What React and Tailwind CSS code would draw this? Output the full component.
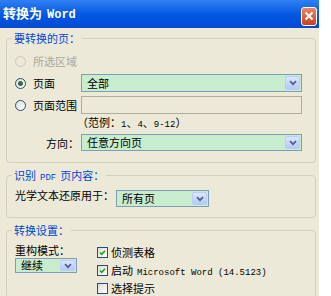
import clsx from 'clsx'

// Win XP style "转换为 Word" dialog

function Mono({ children, className }) {
  return (
    <span className={clsx("font-['Liberation_Mono',monospace] text-[9px] leading-none", className)}>
      {children}
    </span>
  )
}

function Chevron() {
  return (
    <svg width="8" height="6" viewBox="0 0 8 6">
      <path d="M1 1.2 L4 4.2 L7 1.2" stroke="#4d6185" strokeWidth="1.7" fill="none" />
    </svg>
  )
}

function Combo({ value, className }) {
  return (
    <div className={clsx('flex items-stretch border border-[#7f9db9] bg-[#c8ecce] p-[1px]', className)}>
      <span className="flex flex-1 items-center pl-[4px] text-[11px] leading-none">{value}</span>
      <span className="flex w-[15px] items-center justify-center rounded-[2px] border border-[#b9cdf7] bg-gradient-to-b from-[#dbe6fe] to-[#b4c9f8]">
        <Chevron />
      </span>
    </div>
  )
}

function Radio({ checked, disabled }) {
  return (
    <span
      className={clsx(
        'flex h-[11px] w-[11px] shrink-0 items-center justify-center rounded-full border',
        disabled ? 'border-[#cac8bb] bg-[#ece9d8]' : 'border-[#1c5180] bg-gradient-to-br from-[#dcdcd6] to-white'
      )}
    >
      {checked && <span className="h-[5px] w-[5px] rounded-full bg-[#3d6b3d]" />}
    </span>
  )
}

function Check({ checked }) {
  return (
    <span className="flex h-[11px] w-[11px] shrink-0 items-center justify-center border border-[#1c5180] bg-gradient-to-br from-[#dcdcd6] to-white">
      {checked && (
        <svg width="7" height="7" viewBox="0 0 7 7">
          <path d="M1 3.5 L2.8 5.3 L6 1.8" stroke="#21a121" strokeWidth="1.6" fill="none" />
        </svg>
      )}
    </span>
  )
}

function Group({ title, children, className }) {
  return (
    <fieldset className={clsx('rounded-[4px] border border-[#d0d0bf]', className)}>
      <legend className="ml-[5px] flex h-[14px] items-baseline px-[2px] text-[11px] leading-[14px] text-[#0046d5]">
        {title}
      </legend>
      {children}
    </fieldset>
  )
}

export default function App() {
  return (
    <div className="flex h-[296px] w-[331px] overflow-hidden bg-white font-['Noto_Sans_CJK_SC',sans-serif] text-[11px] leading-[14px] text-black">
      <div className="flex h-[296px] w-[319px] flex-col bg-[#ece9d8]">
        {/* title bar */}
        <div className="flex h-[28px] shrink-0 items-center justify-between bg-gradient-to-b from-[#2f80f2] via-[#0458e2] to-[#0049d3] pl-[3px] pr-[2px]">
          <span className="flex items-baseline text-[13px] font-bold text-white">
            <span>转换为</span>
            <span className="ml-[5px] font-['Liberation_Mono',monospace] text-[12px]">Word</span>
          </span>
          <span className="mt-[4px] flex h-[19px] w-[16px] items-center justify-center rounded-[3px] border border-white bg-gradient-to-b from-[#e9866a] to-[#c8401c]">
            <svg width="10" height="10" viewBox="0 0 10 10">
              <path d="M1.5 1.5 L8.5 8.5 M8.5 1.5 L1.5 8.5" stroke="white" strokeWidth="2" />
            </svg>
          </span>
        </div>

        <div className="flex flex-col pl-[6px] pr-[3px]">
          <Group title="要转换的页：" className="mt-[3px]">
            <div className="flex flex-col pb-[11px] pl-[8px] pr-[13px] pt-[7px]">
              <div className="flex h-[18px] items-center gap-[7px] text-[#aca899]">
                <Radio disabled />
                <span>所选区域</span>
              </div>
              <div className="mt-[4px] flex h-[18px] items-stretch">
                <div className="flex w-[66px] items-center gap-[7px]">
                  <Radio checked />
                  <span>页面</span>
                </div>
                <Combo value="全部" className="flex-1" />
              </div>
              <div className="mt-[4px] flex h-[18px] items-stretch">
                <div className="flex w-[66px] items-center gap-[7px]">
                  <Radio />
                  <span>页面范围</span>
                </div>
                <div className="flex-1 border border-[#aeac9f] bg-[#ece9d8]" />
              </div>
              <div className="ml-[62px] mt-[1px] flex h-[14px] items-baseline">
                <span>（范例：</span>
                <Mono>1</Mono>
                <span>、</span>
                <Mono>4</Mono>
                <span>、</span>
                <Mono>9-12</Mono>
                <span>）</span>
              </div>
              <div className="mt-[5px] flex h-[17px] items-stretch">
                <div className="flex w-[66px] items-center justify-end pr-[2px]">方向：</div>
                <Combo value="任意方向页" className="flex-1" />
              </div>
            </div>
          </Group>

          <Group
            title={
              <>
                <span>识别</span>
                <Mono className="mx-[4px]">PDF</Mono>
                <span>页内容：</span>
              </>
            }
            className="mt-[5px]"
          >
            <div className="flex items-start pb-[10px] pl-[8px] pt-[6px]">
              <span className="w-[101px]">光学文本还原用于：</span>
              <Combo value="所有页" className="mt-[2px] h-[17px] w-[93px]" />
            </div>
          </Group>

          <Group title="转换设置：" className="mt-[5px]">
            <div className="flex pl-[8px] pt-[6px]">
              <div className="flex w-[62px] flex-col">
                <span className="h-[14px]">重构模式：</span>
                <Combo value="继续" className="mt-[1px] h-[15px]" />
              </div>
              <div className="ml-[20px] flex flex-col">
                <div className="flex h-[18px] items-center gap-[3px]">
                  <Check checked />
                  <span>侦测表格</span>
                </div>
                <div className="flex h-[18px] items-center gap-[3px]">
                  <Check checked />
                  <span className="flex items-baseline">
                    <span>启动</span>
                    <Mono className="ml-[4px]">Microsoft Word (14.5123)</Mono>
                  </span>
                </div>
                <div className="flex h-[18px] items-center gap-[3px]">
                  <Check />
                  <span>选择提示</span>
                </div>
              </div>
            </div>
          </Group>
        </div>
      </div>
    </div>
  )
}
